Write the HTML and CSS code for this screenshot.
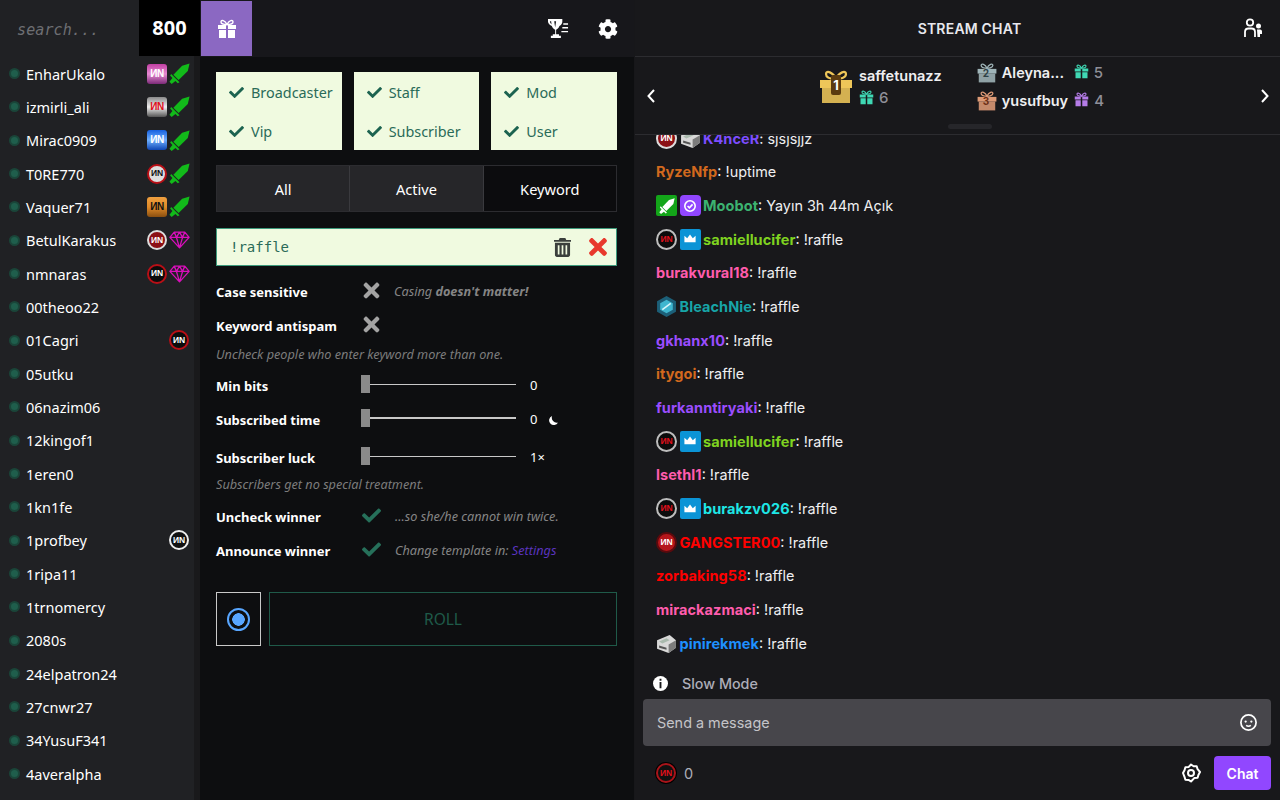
FILE: index.html
```html
<!DOCTYPE html>
<html lang="en">
<head>
<meta charset="utf-8">
<title>Raffle</title>
<link rel="stylesheet" href="styles.css">
</head>
<body>
<svg class="defs" aria-hidden="true">
  <symbol id="i-check" viewBox="0 0 512 512"><path d="M173.898 439.404l-166.4-166.4c-9.997-9.997-9.997-26.206 0-36.204l36.203-36.204c9.997-9.998 26.207-9.998 36.204 0L192 312.69 432.095 72.596c9.997-9.997 26.207-9.997 36.204 0l36.203 36.204c9.997 9.997 9.997 26.206 0 36.204l-294.4 294.401c-9.998 9.997-26.207 9.997-36.204-.001z"/></symbol>
  <symbol id="i-x" viewBox="0 0 352 512"><path d="M242.72 256l100.07-100.07c12.28-12.28 12.28-32.19 0-44.48l-22.24-22.24c-12.28-12.28-32.19-12.28-44.48 0L176 189.28 75.93 89.21c-12.28-12.28-32.19-12.28-44.48 0L9.21 111.45c-12.28 12.28-12.28 32.19 0 44.48L109.28 256 9.21 356.07c-12.28 12.28-12.28 32.19 0 44.48l22.24 22.24c12.28 12.28 32.2 12.28 44.48 0L176 322.72l100.07 100.07c12.28 12.28 32.2 12.28 44.48 0l22.24-22.24c12.28-12.28 12.28-32.19 0-44.48L242.72 256z"/></symbol>
  <symbol id="i-gear" viewBox="0 0 512 512"><path d="M487.4 315.7l-42.6-24.6c4.3-23.2 4.3-47 0-70.2l42.6-24.6c4.9-2.8 7.1-8.6 5.5-14-11.1-35.6-30-67.8-54.7-94.6-3.8-4.1-10-5.1-14.8-2.3L380.8 110c-17.9-15.4-38.5-27.3-60.8-35.1V25.8c0-5.6-3.9-10.5-9.4-11.7-36.7-8.2-74.3-7.8-109.2 0-5.5 1.2-9.4 6.1-9.4 11.7V75c-22.2 7.9-42.8 19.8-60.8 35.1L88.7 85.5c-4.9-2.8-11-1.9-14.8 2.3-24.7 26.7-43.6 58.9-54.7 94.6-1.7 5.4.6 11.2 5.5 14L67.3 221c-4.3 23.2-4.3 47 0 70.2l-42.6 24.6c-4.9 2.8-7.1 8.6-5.5 14 11.1 35.6 30 67.8 54.7 94.6 3.8 4.1 10 5.1 14.8 2.3l42.6-24.6c17.9 15.4 38.5 27.3 60.8 35.1v49.2c0 5.6 3.9 10.5 9.4 11.7 36.7 8.2 74.3 7.8 109.2 0 5.5-1.2 9.4-6.1 9.4-11.7v-49.2c22.2-7.9 42.8-19.8 60.8-35.1l42.6 24.6c4.9 2.8 11 1.9 14.8-2.3 24.7-26.7 43.6-58.9 54.7-94.6 1.5-5.5-.7-11.3-5.6-14.1zM256 336c-44.1 0-80-35.9-80-80s35.9-80 80-80 80 35.9 80 80-35.9 80-80 80z"/></symbol>
  <symbol id="i-gift" viewBox="0 0 20 20"><path d="M1 6h8v4H1zM11 6h8v4h-8zM2 11h7v8H2zM11 11h7v8h-7z"/><path fill="none" stroke="currentColor" stroke-width="1.4" d="M10 5.500C8 1 4 .5 4 3c0 2 3 2.500 6 2.500C13 5.500 16 5 16 3c0-2.500-4-2-6 2.500z"/></symbol>
  <symbol id="i-sword" viewBox="0 0 24 24"><path d="M23.500 .5L21.500 9 11 19.500 5 13.500 15 3z"/><path d="M2.500 12.500l9.500 9.500-2 1.200-2.600-2.600L3 24 .5 21.500l3.400-4.500-2.600-2.600z"/></symbol>
  <symbol id="i-gem" viewBox="0 0 24 20"><path fill="none" stroke="currentColor" stroke-width="1.500" stroke-linejoin="round" d="M6 1h12l5 6-11 12L1 7zM1 7h22M8.500 7L12 19l3.500-12M6 1l2.500 6L12 1l3.500 6L18 1"/></symbol>
  <symbol id="i-crown" viewBox="0 0 20 20"><path d="M3 6l3.500 3L10 4.500 13.500 9 17 6v8H3z"/></symbol>
  <symbol id="i-verified" viewBox="0 0 20 20"><circle cx="10" cy="10" r="6.500" fill="none" stroke="currentColor" stroke-width="2"/><path fill="none" stroke="currentColor" stroke-width="2" d="M7 10l2.200 2.200L13.200 8"/></symbol>
  <symbol id="i-printer" viewBox="0 0 20 20"><path fill="#d8d8d8" d="M1 7l12-5 6 5v7l-7 5-11-4z"/><path fill="#7c7c7c" d="M12 11l7-4v7l-7 5z"/><path fill="#a9b9ad" d="M3 8l7-3 3 2-7 3z"/><path fill="#555" d="M3 12l7 2v2l-7-2z"/></symbol>
  <symbol id="i-hex" viewBox="0 0 20 20"><path fill="#1c5f78" d="M10 0l9 5v10l-9 5-9-5V5z"/><path fill="#3fb6cf" d="M10 3.500l6 3.500v6l-6 3.500L4 13V7z"/><path stroke="#d7f6fb" stroke-width="1.500" d="M6 13l8-6"/></symbol>
  <symbol id="i-rank" viewBox="0 0 34 34"><path d="M1 10h32v8H1z"/><path d="M3 18h28v15H3z" opacity=".88"/><path fill="none" stroke="currentColor" stroke-width="2.200" d="M17 9C14 2 7 0 7 4c0 4 6 5 10 5 4 0 10-1 10-5 0-4-7-2-10 5z"/></symbol>
</svg>

<div class="app">
  <aside class="side">
    <div class="side-head">
      <span class="search">search...</span>
      <span class="count">800</span>
    </div>
    <div class="side-body">
      <ul class="users">
        <li class="user"><i class="dot"></i><span class="uname">EnharUkalo</span><span class="vn sq magenta">ИN</span><svg class="ico sword"><use href="#i-sword"/></svg></li>
        <li class="user"><i class="dot"></i><span class="uname">izmirli_ali</span><span class="vn sq silver">ИN</span><svg class="ico sword"><use href="#i-sword"/></svg></li>
        <li class="user"><i class="dot"></i><span class="uname">Mirac0909</span><span class="vn sq blue">ИN</span><svg class="ico sword"><use href="#i-sword"/></svg></li>
        <li class="user"><i class="dot"></i><span class="uname">T0RE770</span><span class="vn rd ring">ИN</span><svg class="ico sword"><use href="#i-sword"/></svg></li>
        <li class="user"><i class="dot"></i><span class="uname">Vaquer71</span><span class="vn sq orange">ИN</span><svg class="ico sword"><use href="#i-sword"/></svg></li>
        <li class="user"><i class="dot"></i><span class="uname">BetulKarakus</span><span class="vn rd maroon">ИN</span><svg class="ico gem"><use href="#i-gem"/></svg></li>
        <li class="user"><i class="dot"></i><span class="uname">nmnaras</span><span class="vn rd blackred">ИN</span><svg class="ico gem"><use href="#i-gem"/></svg></li>
        <li class="user"><i class="dot"></i><span class="uname">00theoo22</span></li>
        <li class="user"><i class="dot"></i><span class="uname">01Cagri</span><span class="vn rd blackred solo">ИN</span></li>
        <li class="user"><i class="dot"></i><span class="uname">05utku</span></li>
        <li class="user"><i class="dot"></i><span class="uname">06nazim06</span></li>
        <li class="user"><i class="dot"></i><span class="uname">12kingof1</span></li>
        <li class="user"><i class="dot"></i><span class="uname">1eren0</span></li>
        <li class="user"><i class="dot"></i><span class="uname">1kn1fe</span></li>
        <li class="user"><i class="dot"></i><span class="uname">1profbey</span><span class="vn rd whitering solo">ИN</span></li>
        <li class="user"><i class="dot"></i><span class="uname">1ripa11</span></li>
        <li class="user"><i class="dot"></i><span class="uname">1trnomercy</span></li>
        <li class="user"><i class="dot"></i><span class="uname">2080s</span></li>
        <li class="user"><i class="dot"></i><span class="uname">24elpatron24</span></li>
        <li class="user"><i class="dot"></i><span class="uname">27cnwr27</span></li>
        <li class="user"><i class="dot"></i><span class="uname">34YusuF341</span></li>
        <li class="user"><i class="dot"></i><span class="uname">4averalpha</span></li>
      </ul>
      <div class="track"></div>
    </div>
  </aside>

  <main class="main">
    <header class="main-head">
      <button class="gift-btn"><svg class="ico gift-ico"><use href="#i-gift"/></svg></button>
      <span class="spring"></span>
      <svg class="trophy" viewBox="0 0 24 22"><path fill="#fff" d="M1 1h15v3c0 1-.5 3-3 4.500-.8 2.500-2.500 3.500-3.500 3.800V17h3v1.500h2V21H4v-2.500h2V17h2.500v-4.700C7.500 12 5.800 11 5 8.500 2 7 1 5 1 4zM3 3.500c.2 1.800 1 2.700 1.700 3.200L4.300 3.500zM7.500 3.500l1 6.500 1-6.500z"/><path fill="#fff" d="M17 5.500h5V7h-5zM16 9.500h6V11h-6zM15 13.500h7V15h-7z"/></svg>
      <svg class="ico head-gear"><use href="#i-gear"/></svg>
    </header>

    <div class="panel">
      <div class="cards">
        <div class="card">
          <div class="opt"><svg class="ico ck"><use href="#i-check"/></svg>Broadcaster</div>
          <div class="opt"><svg class="ico ck"><use href="#i-check"/></svg>Vip</div>
        </div>
        <div class="card">
          <div class="opt"><svg class="ico ck"><use href="#i-check"/></svg>Staff</div>
          <div class="opt"><svg class="ico ck"><use href="#i-check"/></svg>Subscriber</div>
        </div>
        <div class="card">
          <div class="opt"><svg class="ico ck"><use href="#i-check"/></svg>Mod</div>
          <div class="opt"><svg class="ico ck"><use href="#i-check"/></svg>User</div>
        </div>
      </div>

      <div class="tabs">
        <div class="tab">All</div>
        <div class="tab">Active</div>
        <div class="tab on">Keyword</div>
      </div>

      <div class="keyword">
        <span class="kw-text">!raffle</span>
        <svg class="trash" viewBox="0 0 18 20"><path fill="#3a3f3c" d="M6 0h6l1 2h5v2H0V2h5zM1 5h16v13c0 1-1 2-2 2H3c-1 0-2-1-2-2zM4 7.500v10h1.800v-10zM8.100 7.500v10h1.800v-10zM12.200 7.500v10H14v-10z"/></svg>
        <svg class="ico kw-x"><use href="#i-x"/></svg>
      </div>

      <div class="row r-case">
        <span class="lbl">Case sensitive</span>
        <svg class="ico tog-x"><use href="#i-x"/></svg>
        <span class="hint">Casing <b>doesn't matter!</b></span>
      </div>
      <div class="row r-anti">
        <span class="lbl">Keyword antispam</span>
        <svg class="ico tog-x"><use href="#i-x"/></svg>
      </div>
      <p class="note">Uncheck people who enter keyword more than one.</p>

      <div class="row r-bits">
        <span class="lbl">Min bits</span>
        <div class="slider"><i class="thumb"></i><i class="rail"></i></div>
        <span class="val">0</span>
      </div>
      <div class="row r-time">
        <span class="lbl">Subscribed time</span>
        <div class="slider"><i class="thumb"></i><i class="rail"></i></div>
        <span class="val">0</span>
        <svg class="moon" viewBox="0 0 12 12"><path fill="#fff" d="M4.500 1A5.200 5.200 0 1 0 11 8.300 5.500 5.500 0 0 1 4.500 1z"/></svg>
      </div>
      <div class="row r-luck">
        <span class="lbl">Subscriber luck</span>
        <div class="slider"><i class="thumb"></i><i class="rail"></i></div>
        <span class="val">1×</span>
      </div>
      <p class="note">Subscribers get no special treatment.</p>

      <div class="row r-unc">
        <span class="lbl">Uncheck winner</span>
        <svg class="ico tog-c"><use href="#i-check"/></svg>
        <span class="hint">...so she/he cannot win twice.</span>
      </div>
      <div class="row r-ann">
        <span class="lbl">Announce winner</span>
        <svg class="ico tog-c"><use href="#i-check"/></svg>
        <span class="hint">Change template in: <a class="link">Settings</a></span>
      </div>

      <div class="actions">
        <div class="radio-box"><span class="radio"></span></div>
        <div class="roll">ROLL</div>
      </div>
    </div>
  </main>

  <section class="chat">
    <header class="chat-head">
      <span class="chat-title">STREAM CHAT</span>
      <svg class="people" viewBox="0 0 20 20"><circle cx="7" cy="4.500" r="3.200" fill="none" stroke="#fff" stroke-width="1.800"/><path fill="none" stroke="#fff" stroke-width="1.800" d="M2 19v-5c0-2 1.500-3.500 3.500-3.500h3c2 0 3.500 1.500 3.500 3.500v5"/><circle cx="15.500" cy="8" r="2.500" fill="#fff"/><path fill="#fff" d="M14 11.500h3c1.500 0 2 1 2 2V16h-2v3h-2.500z"/></svg>
    </header>

    <div class="board">
      <svg class="chev" viewBox="0 0 10 16"><path fill="none" stroke="#fff" stroke-width="2" d="M8 2L2.500 8 8 14"/></svg>
      <div class="ranks">
        <div class="rank-one">
          <svg class="rk rk1"><use href="#i-rank"/></svg>
          <span class="rk-num n1">1</span>
          <div class="rk-info">
            <span class="rk-name">saffetunazz</span>
            <span class="rk-sub"><svg class="ico mini teal"><use href="#i-gift"/></svg><em>6</em></span>
          </div>
        </div>
        <div class="rank-rest">
          <div class="rank-sm">
            <svg class="rk rk2"><use href="#i-rank"/></svg>
            <span class="rk-num n2">2</span>
            <span class="rk-name trunc">Aleyna...</span>
            <svg class="ico mini teal"><use href="#i-gift"/></svg><em>5</em>
          </div>
          <div class="rank-sm">
            <svg class="rk rk3"><use href="#i-rank"/></svg>
            <span class="rk-num n3">3</span>
            <span class="rk-name">yusufbuy</span>
            <svg class="ico mini violet"><use href="#i-gift"/></svg><em>4</em>
          </div>
        </div>
      </div>
      <svg class="chev" viewBox="0 0 10 16"><path fill="none" stroke="#fff" stroke-width="2" d="M2 2l5.500 6L2 14"/></svg>
      <span class="handle"></span>
    </div>

    <div class="msgs">
      <p class="msg"><span class="vn rd maroon bd">ИN</span><svg class="bd"><use href="#i-printer"/></svg><b class="c-violet2">K4nceR</b>: sjsjsjjz</p>
      <p class="msg"><b class="c-orange">RyzeNfp</b>: !uptime</p>
      <p class="msg"><span class="bd box green"><svg><use href="#i-sword"/></svg></span><span class="bd box purple"><svg><use href="#i-verified"/></svg></span><b class="c-green">Moobot</b>: Yayın 3h 44m Açık</p>
      <p class="msg"><span class="vn rd grayring bd">ИN</span><span class="bd box sky"><svg><use href="#i-crown"/></svg></span><b class="c-lime">samiellucifer</b>: !raffle</p>
      <p class="msg"><b class="c-pink">burakvural18</b>: !raffle</p>
      <p class="msg"><svg class="bd"><use href="#i-hex"/></svg><b class="c-teal">BleachNie</b>: !raffle</p>
      <p class="msg"><b class="c-violet">gkhanx10</b>: !raffle</p>
      <p class="msg"><b class="c-orange">itygoi</b>: !raffle</p>
      <p class="msg"><b class="c-violet">furkanntiryaki</b>: !raffle</p>
      <p class="msg"><span class="vn rd grayring bd">ИN</span><span class="bd box sky"><svg><use href="#i-crown"/></svg></span><b class="c-lime">samiellucifer</b>: !raffle</p>
      <p class="msg"><b class="c-pink">lsethl1</b>: !raffle</p>
      <p class="msg"><span class="vn rd grayring bd">ИN</span><span class="bd box sky"><svg><use href="#i-crown"/></svg></span><b class="c-cyan">burakzv026</b>: !raffle</p>
      <p class="msg"><span class="vn rd red bd">ИN</span><b class="c-red">GANGSTER00</b>: !raffle</p>
      <p class="msg"><b class="c-red">zorbaking58</b>: !raffle</p>
      <p class="msg"><b class="c-pink">mirackazmaci</b>: !raffle</p>
      <p class="msg"><svg class="bd"><use href="#i-printer"/></svg><b class="c-blue">pinirekmek</b>: !raffle</p>
    </div>

    <div class="slow">
      <svg class="info" viewBox="0 0 16 16"><circle cx="8" cy="8" r="8" fill="#fff"/><path fill="#18181b" d="M7 3h2v2H7zM7 6.500h2V13H7z"/></svg>
      <span>Slow Mode</span>
    </div>
    <div class="input">
      <span>Send a message</span>
      <svg class="smile" viewBox="0 0 20 20"><circle cx="10" cy="10" r="8" fill="none" stroke="#fff" stroke-width="1.800"/><circle cx="7" cy="9" r="1.200" fill="#fff"/><circle cx="13" cy="9" r="1.200" fill="#fff"/><path fill="none" stroke="#fff" stroke-width="1.500" d="M7.500 13c1.500 1.200 3.500 1.200 5 0"/></svg>
    </div>
    <div class="foot">
      <span class="vn rd pointring points">ИN</span>
      <span class="pts">0</span>
      <span class="spring"></span>
      <svg class="foot-gear" viewBox="0 0 20 20"><path fill="none" stroke="#fff" stroke-width="2" stroke-linejoin="round" d="M10 1.500l2.600 1.800 3.100-.1.900 3 2.400 2.800-1.500 2.800-.9 3-3.100.1L10 18.500l-2.500-1.600-3.100-.1-.9-3L2 10l1.500-2.800.9-3 3.100-.1z"/><circle cx="10" cy="10" r="3" fill="none" stroke="#fff" stroke-width="2"/></svg>
      <button class="send">Chat</button>
    </div>
  </section>
</div>
</body>
</html>
```

FILE: styles.css
```css
* { box-sizing: border-box; }
html, body { margin: 0; height: 100%; overflow: hidden; background: #0e0e10; }
.defs { display: block; width: 0; height: 0; }
.spring { flex: 1; }
.ico { display: block; fill: currentColor; }

.app { display: flex; width: 1280px; height: 800px; overflow: hidden; }

/* left list */
.side { width: 200px; flex: none; display: flex; flex-direction: column; background: #202124; color: #fff; font-family: "Noto Sans", sans-serif; }
.side-head { height: 56px; flex: none; display: flex; align-items: center; background: #202124; }
.search { flex: 1; padding: 3px 0 0 17px; font: italic 15px "DejaVu Sans Mono", monospace; letter-spacing: .1px; color: #6e6f73; }
.count { width: 61px; height: 56px; background: #000; display: flex; align-items: center; justify-content: center; font-size: 20px; font-weight: 700; padding-bottom: 2px; }
.side-body { flex: 1; display: flex; min-height: 0; }
.users { list-style: none; margin: 0; padding: 1px 0 0; flex: 1; overflow: hidden; }
.track { width: 6px; background: #19191b; }
.user { height: 33.33px; display: flex; align-items: center; padding: 0 4px 0 9px; font-size: 14.5px; }
.dot { width: 11px; height: 11px; border-radius: 50%; background: #1f5e4c; border: 2px solid #1a4539; margin-right: 6px; flex: none; }
.uname { flex: 1; white-space: nowrap; }

.vn { display: inline-flex; align-items: center; justify-content: center; flex: none; width: 20px; height: 20px; font: 700 10px/1 "Liberation Sans", sans-serif; letter-spacing: -.4px; color: #fff; overflow: hidden; }
.sq { border-radius: 3px; }
.rd { border-radius: 50%; font-size: 8.500px; letter-spacing: -.2px; }
.magenta { background: linear-gradient(#c13fa3, #e78bd2 50%, #7c2a78); }
.silver { background: linear-gradient(#8a8a8a, #efefef 50%, #555); color: #e0101c; }
.blue { background: linear-gradient(#1660e0, #6fb0ff 50%, #0f46b4); }
.orange { background: linear-gradient(#f0a040, #e08a28 50%, #8a4f10); color: #111; }
.ring { background: #ddd; border: 2px solid #b90f16; color: #111; }
.maroon { background: #8c1015; border: 2px solid #ddd; }
.blackred { background: #0c0c0c; border: 2px solid #b90f16; }
.whitering { background: #111; border: 2px solid #eee; }
.grayring { background: #0c0c0c; border: 2px solid #bdbdbd; color: #e0101c; }
.pointring { background: #111; border: 2px solid #a9141a; box-shadow: 0 0 0 1px #000; color: #e0101c; }
.red { background: #b5161b; border: 2px solid #5a0a0d; }
.solo { margin-right: 1px; }
.sword { width: 21px; height: 21px; color: #12ba1a; margin-left: 2px; flex: none; }
.gem { width: 21px; height: 18px; color: #d80fba; margin-left: 2px; flex: none; }

/* middle */
.main { width: 434px; flex: none; display: flex; flex-direction: column; background: #0d0e10; color: #fff; font-family: "Noto Sans", sans-serif; }
.main-head { height: 57px; flex: none; display: flex; align-items: center; background: #17171b; padding: 0 16px 0 1px; }
.gift-btn { width: 51px; height: 55px; border: 0; padding: 0; background: #8b68c2; display: flex; align-items: center; justify-content: center; }
.gift-ico { width: 20px; height: 20px; color: #fff; }
.trophy { width: 23px; height: 21px; margin-right: 28px; }
.head-gear { width: 20px; height: 20px; color: #fff; }

.panel { padding: 15px 17px 0 16px; }
.cards { display: flex; gap: 12px; }
.card { flex: 1; height: 78px; background: #f0fae0; color: #2a6b58; padding: 1px 0 0 13px; font-size: 14.4px; display: flex; flex-direction: column; justify-content: center; gap: 12px; }
.opt { display: flex; align-items: center; height: 27px; white-space: nowrap; }
.ck { width: 15px; height: 15px; color: #1c6350; margin-right: 7px; flex: none; }

.tabs { display: flex; margin-top: 15px; height: 47px; border: 1px solid #2c2c30; }
.tab { flex: 1; display: flex; align-items: center; justify-content: center; background: #262629; font-size: 14.6px; border-left: 1px solid #3a3a3e; }
.tab:first-child { border-left: 0; }
.tab.on { background: #0c0c0e; }

.keyword { margin-top: 16px; height: 38px; background: #f0fae0; border: 1px solid #3d9a7c; display: flex; align-items: center; padding: 0 9px 0 13px; }
.kw-text { flex: 1; font: 14px "DejaVu Sans Mono", monospace; color: #2a6b58; }
.trash { width: 17px; height: 19px; margin-right: 18px; }
.kw-x { width: 18px; height: 26px; color: #e8392c; }

.row { display: flex; align-items: center; }
.lbl { width: 145px; flex: none; font-size: 13px; font-weight: 700; padding-top: 1px; }
.tog-x { width: 17px; height: 23px; margin-left: 2px; color: #a3a3a3; margin-top: -2px; }
.tog-c { width: 19px; height: 19px; margin-left: 1px; color: #26705a; margin-top: -2px; }
.hint { margin-left: 14px; font-size: 12.7px; font-style: italic; color: #858585; margin-top: -1px; }
.hint b { font-weight: 700; }
.link { color: #5a34bf; }
.note { margin: 0; font-size: 12.7px; font-style: italic; color: #7c7c7c; }

.r-case { margin-top: 10px; height: 30px; }
.r-anti { margin-top: 4px; height: 30px; }
.r-anti + .note { margin-top: 5px; height: 17px; }
.r-bits { margin-top: 8px; height: 30px; }
.r-time { margin-top: 4px; height: 30px; }
.r-luck { margin-top: 8px; height: 30px; }
.r-luck + .note { margin-top: 3px; height: 17px; }
.r-unc { margin-top: 9px; height: 30px; }
.r-ann { margin-top: 4px; height: 30px; }

.slider { width: 155px; height: 18px; display: flex; align-items: center; margin-top: -2px; }
.thumb { width: 9px; height: 18px; background: #8a8a8a; flex: none; }
.rail { flex: 1; height: 1px; background: #c8c8c8; }
.r-time .rail { height: 2px; }
.val { margin-left: 14px; font-size: 13px; }
.moon { width: 11px; height: 11px; margin-left: 11px; margin-top: 3px; }

.actions { display: flex; gap: 8px; margin-top: 27px; height: 54px; }
.radio-box { width: 45px; border: 1px solid #c9c9c9; display: flex; align-items: center; justify-content: center; }
.radio { width: 23px; height: 23px; border-radius: 50%; border: 2px solid #58a6ff; background: radial-gradient(circle, #58a6ff 0 6px, #0d0e10 6.500px); }
.roll { flex: 1; border: 1px solid #1f5a49; color: #1f5a49; display: flex; align-items: center; justify-content: center; font-size: 15.500px; }

/* chat */
.chat { flex: 1; min-width: 0; display: flex; flex-direction: column; background: #18181b; color: #efeff1; font-family: Inter, sans-serif; border-left: 1px solid #17171a; }
.chat-head { height: 57px; flex: none; display: flex; align-items: center; justify-content: center; position: relative; border-bottom: 1px solid #2c2c30; padding-left: 24px; }
.chat-title { font-size: 14px; font-weight: 600; letter-spacing: .2px; color: #e8e8ee; }
.people { position: absolute; right: 17px; top: 18px; width: 20px; height: 20px; }

.board { height: 78px; flex: none; position: relative; display: flex; align-items: center; justify-content: space-between; padding: 0 10px 0 11px; border-bottom: 1px solid #2c2c30; }
.chev { width: 10px; height: 16px; }
.ranks { display: flex; gap: 35px; margin: 0 0 18px 7px; }
.rank-one { position: relative; display: flex; align-items: center; gap: 6px; }
.rank-rest { display: flex; flex-direction: column; gap: 8px; }
.rank-sm { position: relative; display: flex; align-items: center; height: 20px; }
.rk { display: block; fill: currentColor; flex: none; }
.rk1 { width: 34px; height: 34px; color: #eec659; }
.rk2 { width: 20px; height: 20px; color: #9fb4b8; margin-right: 5px; }
.rk3 { width: 20px; height: 20px; color: #dd9a76; margin-right: 5px; }
.rk-num { position: absolute; font-weight: 700; color: #fff; }
.n1 { left: 12px; top: 12px; font-size: 13px; background: #5a3b10; width: 10px; height: 20px; line-height: 20px; text-align: center; border-radius: 2px; }
.n2 { left: 6px; top: 4px; font-size: 10px; color: #2e4146; }
.n3 { left: 6px; top: 4px; font-size: 10px; color: #6d2f15; }
.rk-info { display: flex; flex-direction: column; gap: 4px; }
.rk-name { font-size: 14.5px; font-weight: 600; color: #efeff1; white-space: nowrap; }
.trunc { width: 66px; }
.rk-sub { display: flex; align-items: center; }
.mini { width: 15px; height: 15px; flex: none; margin-right: 5px; }
.teal { color: #3fd8b4; }
.violet { color: #b57ce8; }
em { font-style: normal; font-size: 15px; font-weight: 500; color: #8f8f98; }
.rank-sm .mini { margin-left: 6px; margin-top: -3px; }
.handle { position: absolute; left: 313px; bottom: 5px; width: 44px; height: 5px; border-radius: 3px; background: #26262a; }

.msgs { height: 525px; flex: none; overflow: hidden; display: flex; flex-direction: column; justify-content: flex-end; padding: 0 9px 0 21px; }
.msg { margin: 0; flex: none; height: 33.67px; display: flex; align-items: center; font-size: 14.4px; white-space: pre-wrap; }
.msg b { font-weight: 700; font-size: 14.5px; letter-spacing: .06px; }
.bd { width: 21px; height: 21px; margin-right: 2.500px; flex: none; display: block; }
.vn.bd { display: inline-flex; }
.box { border-radius: 2px; display: flex; align-items: center; justify-content: center; color: #fff; }
.box svg { width: 16px; height: 16px; fill: currentColor; display: block; }
.green { background: #13a519; }
.purple { background: #9146ff; border-radius: 4px; }
.sky { background: #0b94d6; }
.c-violet2 { color: #7d4dff; }
.c-orange { color: #d2691e; }
.c-green { color: #3cb371; }
.c-lime { color: #7fd320; }
.c-pink { color: #ff5cad; }
.c-teal { color: #17a5a8; }
.c-violet { color: #9b4dff; }
.c-cyan { color: #1ee6e6; }
.c-red { color: #ff0000; }
.c-blue { color: #1e90ff; }

.slow { height: 39px; flex: none; display: flex; align-items: center; padding: 7px 0 0 18px; font-size: 14.3px; font-weight: 500; color: #adadb8; }
.info { width: 15px; height: 15px; margin-right: 14px; }
.input { margin: 0 9px 0 8px; height: 47px; flex: none; border-radius: 4px; background: #47464b; display: flex; align-items: center; justify-content: space-between; padding: 0 13px 0 14px; font-size: 14.4px; color: #c4c4c8; }
.smile { width: 19px; height: 19px; }
.foot { height: 54px; flex: none; display: flex; align-items: center; padding: 0 9px 0 21px; }
.points { width: 20px; height: 20px; margin-right: 8px; }
.pts { font-size: 14.5px; color: #adadb8; }
.foot-gear { width: 20px; height: 20px; margin-right: 13px; }
.send { width: 57px; height: 34px; border: 0; border-radius: 4px; background: #9147ff; color: #fff; font: 600 14px Inter, sans-serif; }
```
